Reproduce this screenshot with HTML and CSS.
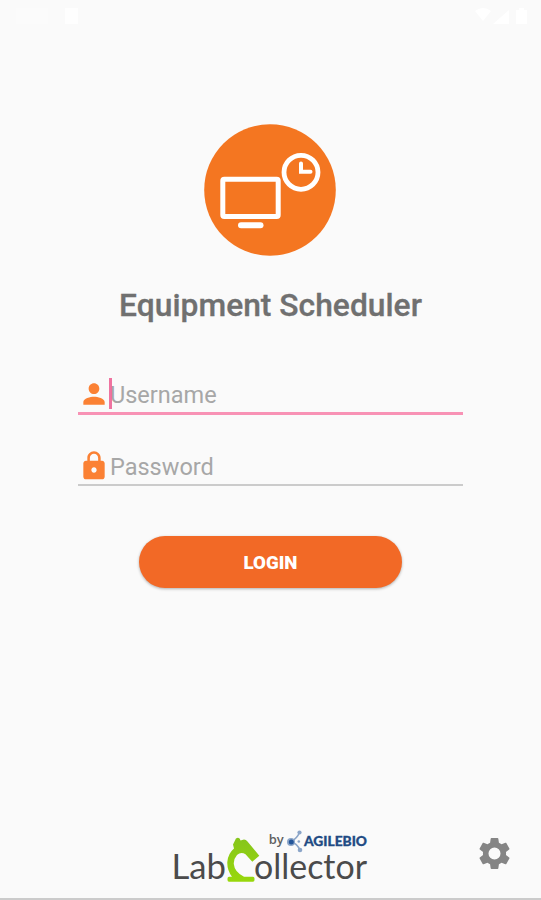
FILE: index.html
```html
<!DOCTYPE html>
<html lang="en">
<head>
<meta charset="utf-8">
<title>Equipment Scheduler</title>
<link rel="stylesheet" href="styles.css">
</head>
<body>
<div class="screen">
  <header class="status">
    <span class="status-time"></span>
    <span class="status-note"></span>
    <svg class="status-icons" width="56" height="20" viewBox="0 0 56 20"><path d="M0 3q8-6 16 0l-8 10zM34 2v14H18zM41 2h3V0h5v2h3v14H41z"/></svg>
  </header>
  <main class="login">
    <svg class="emblem" width="132" height="132" viewBox="0 0 132 132">
      <circle cx="66" cy="66" r="65.8" fill="#f47621"/>
      <g fill="none" stroke="#fff" stroke-linecap="round" stroke-linejoin="round">
        <rect x="18.8" y="55.2" width="55.4" height="37.2" rx="1.5" stroke-width="5"/>
        <path d="M37 101.2h19.5" stroke-width="6"/>
        <circle cx="97" cy="48.3" r="17" stroke-width="4.8"/>
        <path d="M97 39.5v8.2h9.5" stroke-width="4" stroke-linejoin="miter"/>
      </g>
    </svg>
    <h1 class="title">Equipment Scheduler</h1>
    <form class="form">
      <label class="field field-active">
        <svg class="field-icon" viewBox="0 0 24 24"><path d="M12 12c2.21 0 4-1.79 4-4s-1.79-4-4-4-4 1.79-4 4 1.79 4 4 4zm0 2c-2.67 0-8 1.34-8 4v2h16v-2c0-2.66-5.33-4-8-4z"/></svg>
        <span class="placeholder">Username</span>
        <span class="caret"></span>
      </label>
      <label class="field">
        <svg class="field-icon" viewBox="0 0 24 24"><path d="M18 8h-1V6c0-2.76-2.24-5-5-5S7 3.24 7 6v2H6c-1.1 0-2 .9-2 2v10c0 1.1.9 2 2 2h12c1.1 0 2-.9 2-2V10c0-1.1-.9-2-2-2zm-6 9c-1.1 0-2-.9-2-2s.9-2 2-2 2 .9 2 2-.9 2-2 2zm3.1-9H8.9V6c0-1.71 1.39-3.1 3.1-3.1s3.1 1.39 3.1 3.1v2z"/></svg>
        <span class="placeholder">Password</span>
      </label>
      <button class="submit" type="button">LOGIN</button>
    </form>
  </main>
  <footer class="footer">
    <svg class="brand" width="200" height="64" viewBox="0 0 200 64">
      <defs><linearGradient id="leaf" x1="0" y1="0" x2="0" y2="1"><stop offset="0" stop-color="#86c51b"/><stop offset="1" stop-color="#98d80b"/></linearGradient></defs>
      <g class="brand-name">
        <text x=".5" y="50" textLength="54.5" lengthAdjust="spacingAndGlyphs">Lab</text>
        <text x="83" y="50" textLength="113" lengthAdjust="spacingAndGlyphs">ollector</text>
      </g>
      <path fill="url(#leaf)" d="M64 11.500Q64.500 8.500 67 8.700Q69 9 69.500 11.500L73 10.500Q75 10.700 76.500 12.500L88.300 26.700L81.300 32.700L74.500 25.300Q70 22.500 66 26Q62.500 30 62.800 35Q63.500 43 73 47.700H82Q83.500 47.700 83.500 49.500V51Q83.500 52.700 82 52.700H58Q56.500 52.700 56.500 51V49.500Q56.500 47.700 58 47.700H61Q56 41 56.300 33Q57 24.500 63 19.500L62 15.500Z"/>
      <text class="brand-by" x="97.700" y="14.500" textLength="15" lengthAdjust="spacingAndGlyphs">by</text>
      <path fill="none" stroke="#8ba5c8" stroke-width="1.600" d="M128.500 3.500Q126 9.500 120 12.800Q126 14.500 129 21"/>
      <g fill="#8ba5c8"><circle cx="128.500" cy="3.500" r="2.100"/><circle cx="127.800" cy="12.500" r="1.300"/><circle cx="129" cy="21" r="2.300"/><circle cx="120" cy="13" r="4"/></g>
      <circle cx="120.300" cy="13" r="2.500" fill="#24569a"/>
      <text class="brand-maker" x="133" y="17.300" textLength="63" lengthAdjust="spacingAndGlyphs">AGILEBIO</text>
    </svg>
    <svg class="gear" viewBox="0 0 24 24"><path d="M19.43 12.98c.04-.32.07-.64.07-.98s-.03-.66-.07-.98l2.110-1.650c.19-.15.24-.42.12-.64l-2-3.460c-.12-.22-.39-.3-.61-.22l-2.490 1c-.52-.4-1.080-.73-1.690-.98l-.38-2.650C14.460 2.180 14.250 2 14 2h-4c-.25 0-.46.18-.49.42l-.38 2.650c-.61.25-1.170.59-1.690.98l-2.490-1c-.23-.09-.49 0-.61.22l-2 3.460c-.13.22-.07.49.12.64l2.110 1.650c-.04.32-.07.65-.07.98s.03.66.07.98l-2.110 1.650c-.19.15-.24.42-.12.64l2 3.460c.12.22.39.3.61.22l2.490-1c.52.4 1.080.73 1.690.98l.38 2.650c.03.24.24.42.49.42h4c.25 0 .46-.18.49-.42l.38-2.650c.61-.25 1.170-.59 1.690-.98l2.490 1c.23.09.49 0 .61-.22l2-3.460c.12-.22.07-.49-.12-.64l-2.110-1.650zM12 15.900a3.900 3.900 0 1 1 0-7.800 3.900 3.900 0 0 1 0 7.800z"/></svg>
  </footer>
</div>
</body>
</html>
```
FILE: styles.css
```css
* { box-sizing: border-box; }
body { margin: 0; background: #fafafa; font-family: Roboto, "Liberation Sans", sans-serif; }
.screen { height: 900px; display: flex; flex-direction: column; border-bottom: 2px solid #cbcbcb; overflow: hidden; }
.status { height: 123.5px; padding: 8px 10px 0 16px; display: flex; align-items: flex-start; }
.status-time { width: 32px; height: 16px; background: #fbfbfb; }
.status-note { width: 13px; height: 16px; margin-left: 17px; background: #fefefe; }
.status-icons { margin-left: auto; fill: #fff; }
.login { display: flex; flex-direction: column; align-items: center; }
.emblem { display: block; margin-right: 1px; }
.title { margin: 29px 0 0; height: 40px; font-size: 31.8px; line-height: 40px; font-weight: 500; color: #707070; white-space: nowrap; -webkit-text-stroke: .3px #707070; }
.form { width: 385px; margin-top: 47.5px; display: flex; flex-direction: column; align-items: center; }
.field { position: relative; width: 100%; height: 43px; padding-bottom: 2px; display: flex; align-items: flex-end; border-bottom: 2px solid #cbcbcb; }
.field + .field { margin-top: 28px; }
.field-active { border-bottom: 3px solid #f892b5; }
.field-icon { width: 32px; height: 32px; fill: #fb8134; }
.placeholder { font-size: 23.5px; line-height: 30px; color: #a7a7a7; }
.caret { position: absolute; left: 31px; top: 6px; width: 3px; height: 31px; background: #ed6496; opacity: .9; }
.submit { width: 263px; height: 52px; margin-top: 50px; padding: 2px 0 0; border: 0; border-radius: 26px; background: #f26926; color: #fff; font: 900 18.7px/24px Roboto, sans-serif; box-shadow: 0 1px 3px rgba(0,0,0,.3); }
.footer { margin-top: auto; height: 69px; display: flex; align-items: flex-start; padding-left: 171px; }
.brand { display: block; }
.brand-name { font-family: Lato, sans-serif; font-size: 35px; fill: #4b4b4b; }
.brand-by { font: 600 13px "Open Sans", sans-serif; fill: #606060; }
.brand-maker { font: 900 13px Lato, sans-serif; fill: #214a83; stroke: #214a83; stroke-width: .3px; }
.gear { width: 37px; height: 37px; margin: 6px 0 0 105px; fill: #858585; }
```
